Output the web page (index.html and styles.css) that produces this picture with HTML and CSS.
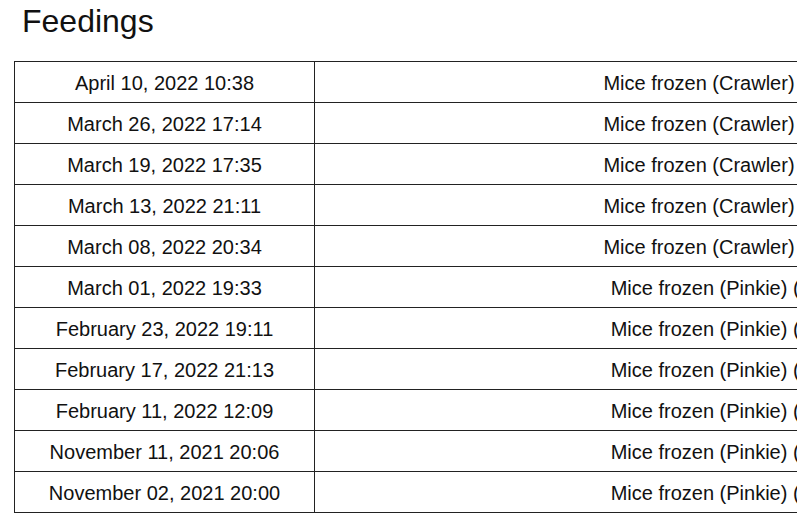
FILE: index.html
```html
<!DOCTYPE html>
<html lang="en">
<head>
<meta charset="utf-8">
<title>Feedings</title>
<link rel="stylesheet" href="styles.css">
</head>
<body>
<h1 class="title">Feedings</h1>
<table class="feedings">
<tbody>
<tr><td class="date">April 10, 2022 10:38</td><td class="food">Mice frozen (Crawler) (1)</td></tr>
<tr><td class="date">March 26, 2022 17:14</td><td class="food">Mice frozen (Crawler) (1)</td></tr>
<tr><td class="date">March 19, 2022 17:35</td><td class="food">Mice frozen (Crawler) (1)</td></tr>
<tr><td class="date">March 13, 2022 21:11</td><td class="food">Mice frozen (Crawler) (1)</td></tr>
<tr><td class="date">March 08, 2022 20:34</td><td class="food">Mice frozen (Crawler) (1)</td></tr>
<tr><td class="date">March 01, 2022 19:33</td><td class="food">Mice frozen (Pinkie) (1)</td></tr>
<tr><td class="date">February 23, 2022 19:11</td><td class="food">Mice frozen (Pinkie) (1)</td></tr>
<tr><td class="date">February 17, 2022 21:13</td><td class="food">Mice frozen (Pinkie) (1)</td></tr>
<tr><td class="date">February 11, 2022 12:09</td><td class="food">Mice frozen (Pinkie) (1)</td></tr>
<tr><td class="date">November 11, 2021 20:06</td><td class="food">Mice frozen (Pinkie) (1)</td></tr>
<tr><td class="date">November 02, 2021 20:00</td><td class="food">Mice frozen (Pinkie) (1)</td></tr>
</tbody>
</table>
</body>
</html>
```
FILE: styles.css
```css
html, body {
  margin: 0;
  padding: 0;
  background: #fff;
  overflow: hidden;
}
body {
  font-family: "Liberation Sans", Arial, sans-serif;
  color: #111;
  padding: 0 0 0 14px;
}
.title {
  margin: 0;
  padding: 3px 0 0 8px;
  font-size: 32px;
  font-weight: normal;
  line-height: 37px;
  height: 61px;
  box-sizing: border-box;
}
.feedings {
  border-collapse: collapse;
  table-layout: fixed;
  width: 1100px;
  font-size: 20px;
}
.feedings td {
  border: 1px solid #222;
  height: 41px;
  padding: 2px 0 0 0;
  text-align: center;
  vertical-align: middle;
  white-space: nowrap;
  box-sizing: border-box;
}
.feedings td.date {
  width: 300px;
}
```
